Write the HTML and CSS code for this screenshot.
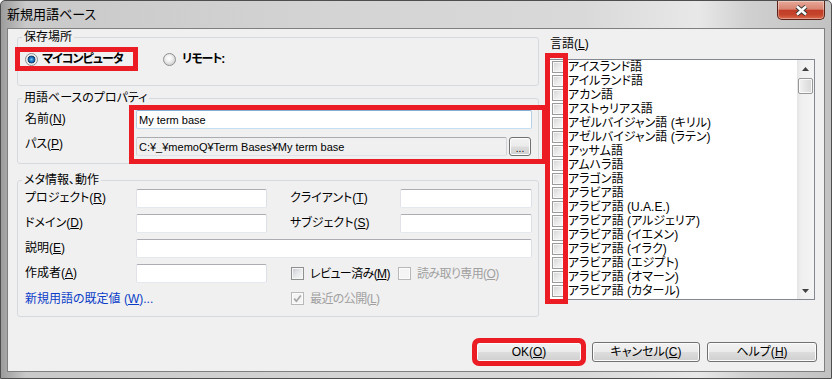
FILE: index.html
```html
<!DOCTYPE html>
<html lang="ja">
<head>
  <meta charset="UTF-8" />
  <meta name="viewport" content="width=device-width, initial-scale=1.0"/>
  <title>新規用語ベース</title>
  <link rel="stylesheet" href="styles.css">
</head>
<body>
  <div class="window">
    <div class="titlebar">
      <span class="title">新規用語ベース</span>
      <button class="close-btn" type="button" aria-label="閉じる">
        <svg width="13" height="11" viewBox="0 0 13 11">
          <path d="M2 1.5 L11 9.5 M11 1.5 L2 9.5" stroke="#3a3a3a" stroke-width="4.4" fill="none"/>
          <path d="M2 1.5 L11 9.5 M11 1.5 L2 9.5" stroke="#ffffff" stroke-width="2.4" fill="none"/>
        </svg>
      </button>
    </div>

    <div class="client">
      <div class="main">
        <div class="left-col">
          <fieldset class="group group-location">
            <legend>保存場所</legend>
            <div class="location">
              <label class="radio marked"><span class="radio-dot checked"></span><span class="radio-text">マイコンピュータ</span></label>
              <label class="radio radio-remote"><span class="radio-dot"></span><span class="radio-text">リモート:</span></label>
            </div>
          </fieldset>

          <fieldset class="group group-props">
            <legend>用語ベースのプロパティ</legend>
            <div class="props">
              <div class="props-labels">
                <span class="row-label">名前(<u>N</u>)</span>
                <span class="row-label path-label">パス(<u>P</u>)</span>
              </div>
              <div class="props-fields marked">
                <input class="textbox focused" type="text" value="My term base">
                <div class="path-row">
                  <input class="textbox readonly" type="text" value="C:¥_¥memoQ¥Term Bases¥My term base" readonly>
                  <button class="btn browse" type="button">...</button>
                </div>
              </div>
            </div>
          </fieldset>

          <fieldset class="group group-meta">
            <legend>メタ情報、動作</legend>
            <div class="meta-grid">
              <span class="row-label">プロジェクト(<u>R</u>)</span>
              <input class="textbox" type="text">
              <span class="row-label col-b">クライアント(<u>T</u>)</span>
              <input class="textbox" type="text">

              <span class="row-label">ドメイン(<u>D</u>)</span>
              <input class="textbox" type="text">
              <span class="row-label col-b">サブジェクト(<u>S</u>)</span>
              <input class="textbox" type="text">

              <span class="row-label">説明(<u>E</u>)</span>
              <input class="textbox wide" type="text">

              <span class="row-label">作成者(<u>A</u>)</span>
              <input class="textbox" type="text">
              <div class="checks">
                <label class="check check-first"><span class="checkbox"></span><span class="check-text">レビュー済み(<u>M</u>)</span></label>
                <label class="check disabled"><span class="checkbox"></span><span class="check-text">読み取り専用(<u>O</u>)</span></label>
              </div>

              <a class="link" href="#">新規用語の既定値 (<u>W</u>)...</a>
              <div class="checks">
                <label class="check disabled">
                  <span class="checkbox">
                    <svg width="11" height="11" viewBox="0 0 11 11"><path d="M2.2 5.6 L4.4 8.2 L8.8 2.4" stroke="#a6a6a6" stroke-width="1.7" fill="none"/></svg>
                  </span>
                  <span class="check-text">最近の公開(<u>L</u>)</span>
                </label>
              </div>
            </div>
          </fieldset>
        </div>

        <div class="right-col">
          <div class="lang-label">言語(<u>L</u>)</div>
          <div class="list-wrap">
            <div class="listbox">
              <div class="list-items">
                <div class="list-item"><span class="list-check"></span>アイスランド語</div>
                <div class="list-item"><span class="list-check"></span>アイルランド語</div>
                <div class="list-item"><span class="list-check"></span>アカン語</div>
                <div class="list-item"><span class="list-check"></span>アストゥリアス語</div>
                <div class="list-item"><span class="list-check"></span>アゼルバイジャン語 (キリル)</div>
                <div class="list-item"><span class="list-check"></span>アゼルバイジャン語 (ラテン)</div>
                <div class="list-item"><span class="list-check"></span>アッサム語</div>
                <div class="list-item"><span class="list-check"></span>アムハラ語</div>
                <div class="list-item"><span class="list-check"></span>アラゴン語</div>
                <div class="list-item"><span class="list-check"></span>アラビア語</div>
                <div class="list-item"><span class="list-check"></span>アラビア語 (U.A.E.)</div>
                <div class="list-item"><span class="list-check"></span>アラビア語 (アルジェリア)</div>
                <div class="list-item"><span class="list-check"></span>アラビア語 (イエメン)</div>
                <div class="list-item"><span class="list-check"></span>アラビア語 (イラク)</div>
                <div class="list-item"><span class="list-check"></span>アラビア語 (エジプト)</div>
                <div class="list-item"><span class="list-check"></span>アラビア語 (オマーン)</div>
                <div class="list-item"><span class="list-check"></span>アラビア語 (カタール)</div>
              </div>
              <div class="scrollbar">
                <div class="sb-btn">
                  <svg width="7" height="4" viewBox="0 0 7 4"><path d="M0 4 L3.5 0 L7 4 Z" fill="#404040"/></svg>
                </div>
                <div class="sb-thumb"></div>
                <div class="sb-track"></div>
                <div class="sb-btn">
                  <svg width="7" height="4" viewBox="0 0 7 4"><path d="M0 0 L3.5 4 L7 0 Z" fill="#404040"/></svg>
                </div>
              </div>
            </div>
            <!-- annotation over the checkbox column -->
            <div class="mark-col"></div>
          </div>
        </div>
      </div>

      <div class="buttons">
        <button class="btn btn-ok marked" type="button">OK(<u>O</u>)</button>
        <button class="btn btn-cancel" type="button">キャンセル(<u>C</u>)</button>
        <button class="btn btn-help" type="button">ヘルプ(<u>H</u>)</button>
      </div>
    </div>
  </div>
</body>
</html>
```

FILE: styles.css
```css
* {
  box-sizing: border-box;
}

body {
  margin: 0;
  font-family: "Liberation Sans", "Noto Sans CJK JP", sans-serif;
  font-size: 12px;
  line-height: 14px;
  color: #000;
  font-feature-settings: "palt";
  background: #fff;
}

u {
  text-decoration-thickness: 1px;
  text-underline-offset: 1px;
}

/* window frame */
.window {
  width: 832px;
  height: 379px;
  display: flex;
  flex-direction: column;
  padding: 0 6px 6px;
  border: 1px solid #4e4e4e;
  border-radius: 5px 5px 0 0;
  background: linear-gradient(to right, #9c9c9c 0%, #c9c9c9 3%, #d4d4d4 40%, #d9d9d9 70%, #e8e8e8 84%, #d0d0d0 90%, #c2c2c2 100%);
}

.titlebar {
  height: 27px;
  display: flex;
  justify-content: space-between;
  align-items: flex-start;
}

.title {
  padding-top: 7px;
  font-size: 13px;
  line-height: 14px;
}

.close-btn {
  width: 48px;
  height: 19px;
  padding: 0;
  display: flex;
  align-items: center;
  justify-content: center;
  border: 1px solid #5c2217;
  border-top: none;
  border-radius: 0 0 5px 5px;
  background: linear-gradient(#e6a898 0%, #d98472 45%, #c23d27 52%, #c4432b 75%, #d96a4c 100%);
  box-shadow: inset 0 0 0 1px rgba(255, 255, 255, 0.35);
}

.client {
  flex: 1;
  display: flex;
  flex-direction: column;
  border: 1px solid #7f7f7f;
  background: #f0f0f0;
}

.main {
  display: flex;
  gap: 8px;
  padding: 0 9px;
}

.left-col {
  width: 522px;
}

.right-col {
  width: 268px;
  padding-top: 8px;
}

/* group boxes */
.group {
  margin: 0;
  padding: 0;
  min-width: 0;
  border: 1px solid #d5dadf;
  border-radius: 3px;
}

.group legend {
  margin-left: 4px;
  padding: 0 2px;
  line-height: 14px;
}

.group-location {
  margin-top: 1px;
}

.group-props {
  margin-top: 5px;
}

.group-meta {
  margin-top: 9px;
}

/* red annotation boxes */
.marked {
  outline: 5px solid #ec1c24;
}

.location {
  display: flex;
  align-items: center;
  padding: 8px 0 19px 2px;
}

.radio {
  display: flex;
  align-items: center;
  gap: 4px;
  height: 14px;
  font-weight: bold;
  white-space: nowrap;
}

.radio-text {
  letter-spacing: -1px;
}

.radio.marked {
  width: 113px;
  padding-left: 5px;
}

.radio-remote {
  margin-left: 30px;
  gap: 6px;
}

.radio-dot {
  width: 13px;
  height: 13px;
  flex: none;
  border: 1px solid #8e8f8f;
  border-radius: 50%;
  background: radial-gradient(circle at 45% 40%, #ffffff 0, #f2f2f2 3px, #d6d6d6 6px);
}

.radio-dot.checked {
  background: radial-gradient(circle at 50% 50%, #7cc8f6 0, #2a86cf 1.6px, #16538f 3px, #0e3a66 3.6px, #e4e4e4 4.2px, #fafafa 6px);
}

/* properties */
.props {
  display: flex;
  padding: 5px 6px 7px 7px;
}

.props-labels {
  width: 111px;
  display: flex;
  flex-direction: column;
  gap: 8px;
}

.row-label {
  line-height: 19px;
  white-space: nowrap;
}

.props-labels .row-label {
  height: 19px;
}

.props-labels .path-label {
  line-height: 14px;
}

.props-fields {
  flex: 1;
  display: flex;
  flex-direction: column;
  gap: 8px;
  margin: 0 -10px -3px -2px;
  padding: 0 10px 3px 2px;
}

.path-row {
  display: flex;
  gap: 2px;
}

.path-row .textbox {
  flex: 1;
  min-width: 0;
}

.textbox {
  height: 19px;
  padding: 0 2px;
  border: 1px solid #abadb3;
  border-color: #abadb3 #dbdfe6 #e3e9ef #e2e3ea;
  border-radius: 2px;
  background: #fff;
  font: inherit;
  font-size: 11px;
  color: #000;
  outline: none;
}

.textbox.focused {
  border-color: #86aed4 #b5cfe7 #c5ddf0 #b5cfe7;
}

.textbox.readonly {
  background: #f0f0f0;
  border-color: #a9abb1 #d0d3d8 #dfe3e8 #d0d3d8;
}

/* buttons */
.btn {
  height: 20px;
  padding: 0;
  border: 1px solid #707070;
  border-radius: 3px;
  background: linear-gradient(#f2f2f2 0%, #ebebeb 48%, #dddddd 52%, #cfcfcf 100%);
  box-shadow: inset 0 0 0 1px #fcfcfc;
  font: inherit;
  color: #000;
}

.browse {
  width: 22px;
  height: 19px;
  margin-right: 1px;
  line-height: 22px;
  font-size: 10px;
}

/* meta info */
.meta-grid {
  display: grid;
  grid-template-columns: 111px 131px 23px 110px 132px;
  grid-auto-rows: 19px;
  row-gap: 6px;
  align-items: center;
  padding: 2px 0 8px 7px;
}

.meta-grid .textbox {
  width: 100%;
}

.col-b {
  grid-column: 4;
}

.meta-grid .wide {
  grid-column: 2 / 6;
}

.checks {
  grid-column: 4 / 6;
  display: flex;
  align-items: center;
  padding-left: 1px;
}

.check {
  display: flex;
  align-items: center;
  gap: 6px;
  white-space: nowrap;
}

.check-text {
  letter-spacing: -0.6px;
}

.check-first {
  width: 107px;
}

.check.disabled {
  color: #a0a0a0;
}

.checkbox {
  width: 13px;
  height: 13px;
  flex: none;
  display: flex;
  border: 1px solid #8e8f8f;
  background: linear-gradient(135deg, #c6c9ce 0%, #e9eaec 55%, #f7f7f7 100%);
  box-shadow: inset 0 0 0 1px #f6f6f6;
}

.check.disabled .checkbox {
  border-color: #b8b8b8;
  background: #f4f4f4;
  box-shadow: inset 0 0 0 1px #fbfbfb;
}

.link {
  grid-column: 1 / 3;
  color: #0a3dc8;
  text-decoration: none;
  white-space: nowrap;
}

/* language list */
.lang-label {
  padding-left: 3px;
}

.list-wrap {
  position: relative;
  margin-top: 8px;
}

.listbox {
  height: 241px;
  display: flex;
  border: 1px solid #828790;
  background: #fff;
  overflow: hidden;
}

.list-items {
  flex: 1;
}

.list-item {
  height: 14px;
  display: flex;
  align-items: center;
  gap: 4px;
  padding-left: 4px;
  white-space: nowrap;
}

.list-check {
  width: 12px;
  height: 12px;
  flex: none;
  border: 1px solid #9a9a9a;
  background: linear-gradient(135deg, #d2d2d2 0%, #ececec 55%, #f8f8f8 100%);
  box-shadow: inset 0 0 0 1px #f8f8f8;
}

.scrollbar {
  width: 17px;
  display: flex;
  flex-direction: column;
  background: linear-gradient(to right, #e4e4e4, #f0f0f0 25%, #f4f4f4);
}

.sb-btn {
  height: 17px;
  display: flex;
  align-items: center;
  justify-content: center;
}

.sb-thumb {
  height: 16px;
  margin: 1px 1px 0;
  border: 1px solid #979797;
  border-radius: 2px;
  background: linear-gradient(to right, #f3f3f3, #e4e4e4 50%, #d8d8d8);
  box-shadow: inset 0 0 0 1px #fafafa;
}

.sb-track {
  flex: 1;
}

.mark-col {
  position: absolute;
  left: -2px;
  top: -6px;
  width: 23px;
  height: 251px;
  border: 5px solid #ec1c24;
}

/* dialog buttons */
.buttons {
  display: flex;
  justify-content: flex-end;
  margin-top: auto;
  padding: 0 7px 9px 0;
}

.btn-ok {
  width: 106px;
  margin-right: 10px;
  outline-offset: -1px;
}

.btn-cancel {
  width: 108px;
  margin-right: 7px;
}

.btn-help {
  width: 110px;
}
```
